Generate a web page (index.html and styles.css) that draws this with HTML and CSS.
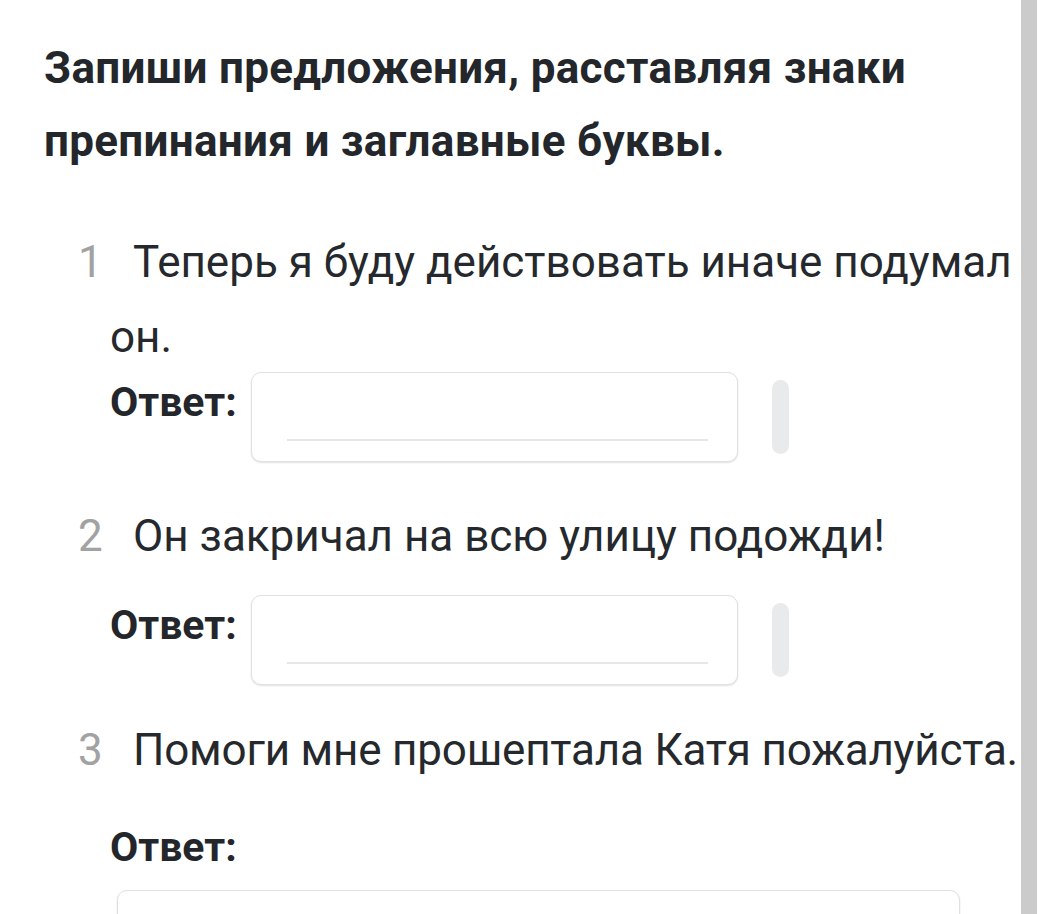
FILE: index.html
```html
<!DOCTYPE html>
<html lang="ru">
<head>
  <meta charset="utf-8">
  <title>Запиши предложения</title>
  <meta name="viewport" content="width=device-width, initial-scale=1">
  <link rel="stylesheet" href="styles.css">
</head>
<body>
  <div class="page">
    <div class="content">
      <h1 class="task-title">Запиши предложения, расставляя знаки препинания и заглавные буквы.</h1>

      <div class="item item-first">
        <p class="sentence"><span class="num">1</span>Теперь я буду действовать иначе подумал он.</p>
        <div class="answer answer-tight">
          <span class="answer-label">Ответ:</span>
          <div class="answer-box"><div class="answer-line"></div></div>
          <div class="handle"></div>
        </div>
      </div>

      <div class="item item-second">
        <p class="sentence"><span class="num">2</span>Он закричал на всю улицу подожди!</p>
        <div class="answer">
          <span class="answer-label">Ответ:</span>
          <div class="answer-box"><div class="answer-line"></div></div>
          <div class="handle"></div>
        </div>
      </div>

      <div class="item item-third">
        <p class="sentence sentence-narrow"><span class="num">3</span>Помоги мне прошептала Катя пожалуйста.</p>
        <div class="answer answer-stacked">
          <span class="answer-label">Ответ:</span>
          <div class="answer-box answer-box-wide"></div>
        </div>
      </div>
    </div>
    <div class="scrollbar"></div>
  </div>
</body>
</html>
```

FILE: styles.css
```css
html, body {
  margin: 0;
  padding: 0;
  background: #ffffff;
}
body {
  font-family: Roboto, "Noto Sans", Arial, sans-serif;
  color: #25292d;
}
.page {
  display: flex;
  height: 914px;
  overflow: hidden;
  padding-right: 23px;
}
.content {
  flex: 1;
  min-width: 0;
}
.scrollbar {
  width: 16px;
  background-color: #cbcbcb;
}

.task-title {
  margin: 32px 0 0 0;
  padding-left: 44px;
  font-size: 44px;
  font-weight: 700;
  line-height: 73px;
  letter-spacing: 0.3px;
  color: #23272b;
}

.item {
  padding-left: 110px;
}
.item-first { margin-top: 47px; }
.item-second { margin-top: 37px; }
.item-third { margin-top: 28px; }

.sentence {
  margin: 0;
  font-size: 44px;
  line-height: 75px;
}
.sentence-narrow {
  white-space: nowrap;
  letter-spacing: -0.2px;
}
.num {
  display: inline-block;
  width: 20px;
  margin-left: -32px;
  margin-right: 35px;
  text-align: right;
  color: #a2a2a2;
  letter-spacing: 0;
}

.answer {
  display: flex;
  align-items: flex-start;
  margin-top: 21px;
}
.answer-tight {
  margin-top: -3px;
}
.answer-label {
  width: 141px;
  flex-shrink: 0;
  font-size: 41px;
  font-weight: 700;
  line-height: 60px;
  color: #23272b;
}
.answer-box {
  box-sizing: border-box;
  width: 487px;
  height: 90px;
  padding: 0 29px 0 35px;
  border: 1.5px solid #e0e2dd;
  border-radius: 10px;
  box-shadow: 0 1px 2px rgba(0, 0, 0, 0.12);
  background: #ffffff;
}
.answer-line {
  margin-top: 66px;
  height: 2px;
  background-color: #e6e7e8;
}
.handle {
  width: 17px;
  height: 74px;
  margin-top: 8px;
  margin-left: 34px;
  border-radius: 9px;
  background-color: #e8eaec;
}

.answer-stacked {
  flex-direction: column;
  margin-top: 29px;
}
.answer-box-wide {
  width: 843px;
  margin-top: 13px;
  margin-left: 7px;
}
```
